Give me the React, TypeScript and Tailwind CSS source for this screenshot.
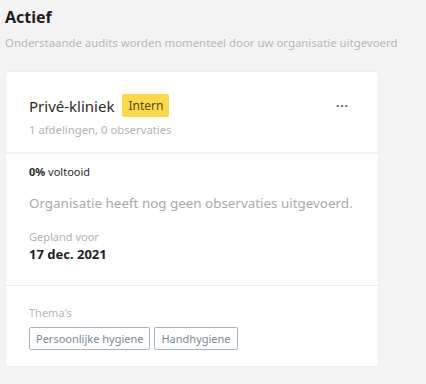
export default function App() {
  return (
    <div
      className="w-[426px] h-[384px] bg-[#f3f3f3] pl-[5px] pt-[6px]"
      style={{ fontFamily: '"Noto Sans", "Open Sans", sans-serif' }}
    >
      <h2 className="text-[16px] font-bold leading-[22px] text-[#1e1e1e]">Actief</h2>
      <p className="mt-[7px] whitespace-nowrap text-[11.4px] leading-[15px] text-[#b8b8b8]">
        Onderstaande audits worden momenteel door uw organisatie uitgevoerd
      </p>

      <div className="mt-[22px] ml-[1px] w-[372px] rounded-[3px] bg-white shadow-[0_0_2px_rgba(0,0,0,0.08)]">
        <div className="border-b-2 border-[#f2f2f2] px-[23px] pt-[22px] pb-[14px]">
          <div className="flex items-center">
            <span className="text-[15px] leading-[22px] text-[#2a2a2a]">Privé-kliniek</span>
            <span className="ml-[8px] rounded-[2px] bg-[#fdd94a] px-[6px] text-[12px] leading-[23px] text-[#5a4a1a]">
              Intern
            </span>
            <span className="ml-auto mr-[6px] text-[12px] font-bold leading-[10px] tracking-[1px] text-[#555]">
              ···
            </span>
          </div>
          <p className="mt-[5px] text-[11.3px] leading-[16px] text-[#b3b3b3]">1 afdelingen, 0 observaties</p>
        </div>

        <div className="px-[23px] pt-[11px] pb-[22px]">
          <p className="text-[11px] leading-[14px] text-[#2a2a2a]">
            <span className="font-bold">0%</span> voltooid
          </p>
          <p className="mt-[14px] whitespace-nowrap text-[13.4px] leading-[20px] text-[#a9a9a9]">
            Organisatie heeft nog geen observaties uitgevoerd.
          </p>
          <p className="mt-[16px] text-[11px] leading-[15px] text-[#b3b3b3]">Gepland voor</p>
          <p className="mt-[1px] text-[13px] font-bold leading-[18px] text-[#1e1e1e]">17 dec. 2021</p>
        </div>

        <div className="border-t border-[#ededed] px-[23px] pt-[19px] pb-[16px]">
          <p className="text-[11px] leading-[15px] text-[#b8b8b8]">Thema's</p>
          <div className="mt-[7px] flex gap-[4px]">
            <span className="rounded-[2px] border border-[#a7b2c2] px-[6px] text-[11px] leading-[21px] text-[#7a8799]">
              Persoonlijke hygiene
            </span>
            <span className="rounded-[2px] border border-[#a7b2c2] px-[6px] text-[11px] leading-[21px] text-[#7a8799]">
              Handhygiene
            </span>
          </div>
        </div>
      </div>
    </div>
  );
}
